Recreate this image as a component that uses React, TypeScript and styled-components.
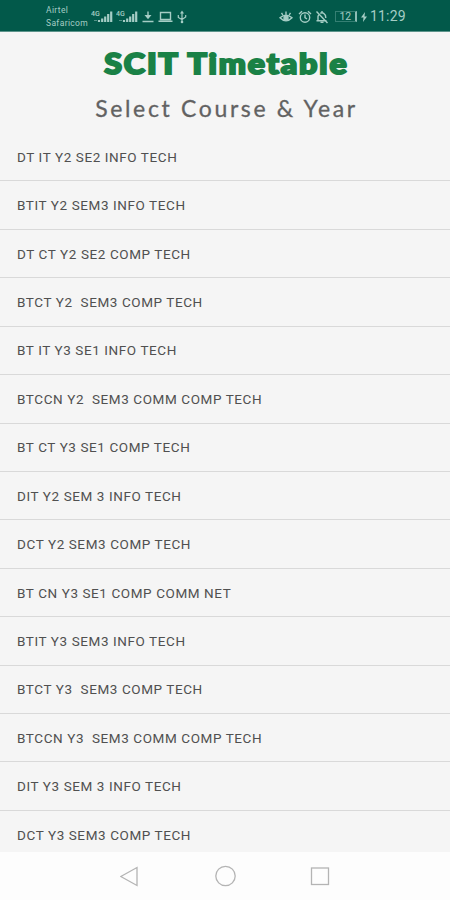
import React from 'react';
import styled, { createGlobalStyle } from 'styled-components';

const GlobalStyle = createGlobalStyle`
  * { box-sizing: border-box; }
  body { margin: 0; background: #f5f5f5; font-family: Roboto, sans-serif; }
`;

const Screen = styled.div`
  width: 450px;
  height: 900px;
  display: flex;
  flex-direction: column;
  overflow: hidden;
  background: #f5f5f5;
`;

const StatusBar = styled.header`
  flex: none;
  height: 32px;
  display: flex;
  justify-content: space-between;
  padding: 0 44px 0 46px;
  background: #02594a;
  border-bottom: 1px solid #5d948b;
  color: #a5cdc5;
`;

const StatusGroup = styled.div`
  display: flex;
  align-items: center;
`;

const Carriers = styled.div`
  width: 43px;
  padding-top: 2px;
  font-size: 8.5px;
  line-height: 12.5px;
  letter-spacing: 0.35px;
`;

const Glyph = styled.svg<{ $gap?: number }>`
  display: block;
  flex: none;
  margin-left: ${(p) => p.$gap ?? 0}px;
  margin-top: 2px;
  fill: none;
  stroke: currentColor;
  stroke-width: 1.4;
`;

const Battery = styled.span`
  width: 22px;
  height: 11px;
  margin: 1px 0 0 6px;
  border: 1px solid #357f73;
  border-right: 2px solid #8dbcb3;
  font-size: 10.5px;
  line-height: 10px;
  text-align: center;
`;

const Clock = styled.span`
  padding-top: 1px;
  margin-left: 2px;
  font-size: 14px;
  letter-spacing: 0.25px;
`;

const Heading = styled.div`
  flex: none;
  height: 101px;
  display: flex;
  flex-direction: column;
  align-items: center;
`;

const Title = styled.h1`
  margin: 12px 0 0 3px;
  height: 40px;
  font: 900 27.5px/40px Lato, sans-serif;
  letter-spacing: 1.6px;
  white-space: nowrap;
  color: #1a8146;
  -webkit-text-stroke: 2px #1a8146;
  stroke-linejoin: round;
  transform: scaleX(1.17);
`;

const Subtitle = styled.h2`
  margin: 7px 0 0 3px;
  font: 400 23px/34px Lato, sans-serif;
  letter-spacing: 2.65px;
  white-space: nowrap;
  color: #626262;
  -webkit-text-stroke: 0.3px #626262;
`;

const CourseList = styled.ul`
  flex: 1;
  min-height: 0;
  margin: 0;
  padding: 0;
  overflow: hidden;
  list-style: none;
`;

const CourseRow = styled.li`
  height: 48.43px;
  padding: 0 17px;
  display: flex;
  align-items: center;
  border-bottom: 1px solid #d9d9d9;
  font-size: 13.5px;
  letter-spacing: 0.59px;
  white-space: pre;
  color: #505050;
`;

const NavBar = styled.nav`
  flex: none;
  height: 48px;
  display: flex;
  justify-content: center;
  gap: 73px;
  padding: 13px 0 0 2px;
  background: #fdfdfd;
`;

const NavIcon = styled.svg`
  display: block;
  width: 22px;
  height: 22px;
  fill: none;
  stroke: #b4b4b4;
  stroke-width: 1.3;
`;

const courses = [
  'DT IT Y2 SE2 INFO TECH',
  'BTIT Y2 SEM3 INFO TECH',
  'DT CT Y2 SE2 COMP TECH',
  'BTCT Y2  SEM3 COMP TECH',
  'BT IT Y3 SE1 INFO TECH',
  'BTCCN Y2  SEM3 COMM COMP TECH',
  'BT CT Y3 SE1 COMP TECH',
  'DIT Y2 SEM 3 INFO TECH',
  'DCT Y2 SEM3 COMP TECH',
  'BT CN Y3 SE1 COMP COMM NET',
  'BTIT Y3 SEM3 INFO TECH',
  'BTCT Y3  SEM3 COMP TECH',
  'BTCCN Y3  SEM3 COMM COMP TECH',
  'DIT Y3 SEM 3 INFO TECH',
  'DCT Y3 SEM3 COMP TECH',
];

const SignalLabel = styled.text`
  font: 500 7px Roboto, sans-serif;
  fill: currentColor;
  stroke: none;
`;

const Signal = ({ gap }: { gap: number }) => (
  <Glyph $gap={gap} width="23" height="16" viewBox="0 0 23 16">
    <SignalLabel x="0" y="6.5">4G</SignalLabel>
    <path d="M8 13v-2M11.2 13V9.5M14.2 13V7.5M17.2 13V5M20.2 13V2.5" strokeWidth="2.2" />
    <path d="M3 11.5h3" strokeWidth="1" opacity=".5" />
  </Glyph>
);

export default function App() {
  return (
    <Screen>
      <GlobalStyle />
      <StatusBar>
        <StatusGroup>
          <Carriers>
            <div>Airtel</div>
            <div>Safaricom</div>
          </Carriers>
          <Signal gap={2} />
          <Signal gap={2} />
          <Glyph $gap={2} width="14" height="14" viewBox="0 0 14 14">
            <path d="M7 1.5v6M1.5 11.5h11" />
            <path d="M3.5 5h7L7 9.2z" fill="currentColor" stroke="none" />
          </Glyph>
          <Glyph $gap={3} width="15" height="14" viewBox="0 0 15 14">
            <path d="M2.5 2.5h10v7h-10zM.5 11.3h14" />
          </Glyph>
          <Glyph $gap={4} width="10" height="14" viewBox="0 0 10 14">
            <path d="M5 2v10M1.3 5v2.5L5 9.5 8.7 7V5" strokeWidth="1.2" />
            <path d="M3 3.5 5 .5l2 3z" fill="currentColor" stroke="none" />
            <circle cx="5" cy="12" r="1.3" fill="currentColor" stroke="none" />
          </Glyph>
        </StatusGroup>
        <StatusGroup>
          <Glyph width="14" height="14" viewBox="0 0 14 14">
            <path d="M1 7.8Q7 2.5 13 7.8 7 14 1 7.8zM7 4.5V1.5M3.8 5 2.5 2.8M10.2 5 11.5 2.8" />
            <circle cx="7" cy="8" r="2" fill="currentColor" />
          </Glyph>
          <Glyph $gap={5} width="14" height="14" viewBox="0 0 14 14">
            <circle cx="7" cy="7.5" r="4.7" />
            <path d="M7 4.5v3.2L9 9M1 4l3-2.8M13 4l-3-2.8" />
          </Glyph>
          <Glyph $gap={3} width="14" height="14" viewBox="0 0 14 14">
            <path d="M1.5 10.7h10M3 10.5V6.5Q3.2 5.4 4 4.4M5.3 3.3Q7 2.3 8.7 3.3 10.8 4.5 10.8 8M7 1v1.5M5.5 12.4h3M1.5 1.5l11 11.5" />
          </Glyph>
          <Battery>12</Battery>
          <Glyph $gap={3} width="8" height="12" viewBox="0 0 8 12">
            <path d="M5 1 1 6.5h2.5L3 11l4-5.5H4.5z" fill="currentColor" stroke="none" />
          </Glyph>
          <Clock>11:29</Clock>
        </StatusGroup>
      </StatusBar>
      <Heading>
        <Title>SCIT Timetable</Title>
        <Subtitle>Select Course &amp; Year</Subtitle>
      </Heading>
      <CourseList>
        {courses.map((course) => (
          <CourseRow key={course}>{course}</CourseRow>
        ))}
      </CourseList>
      <NavBar>
        <NavIcon viewBox="0 0 22 22">
          <path d="M17 2.5v18L.8 11.5z" />
        </NavIcon>
        <NavIcon viewBox="0 0 22 22">
          <circle cx="10.5" cy="11" r="9.7" />
        </NavIcon>
        <NavIcon viewBox="0 0 22 22">
          <rect x="1.5" y="3" width="17" height="16.5" />
        </NavIcon>
      </NavBar>
    </Screen>
  );
}
